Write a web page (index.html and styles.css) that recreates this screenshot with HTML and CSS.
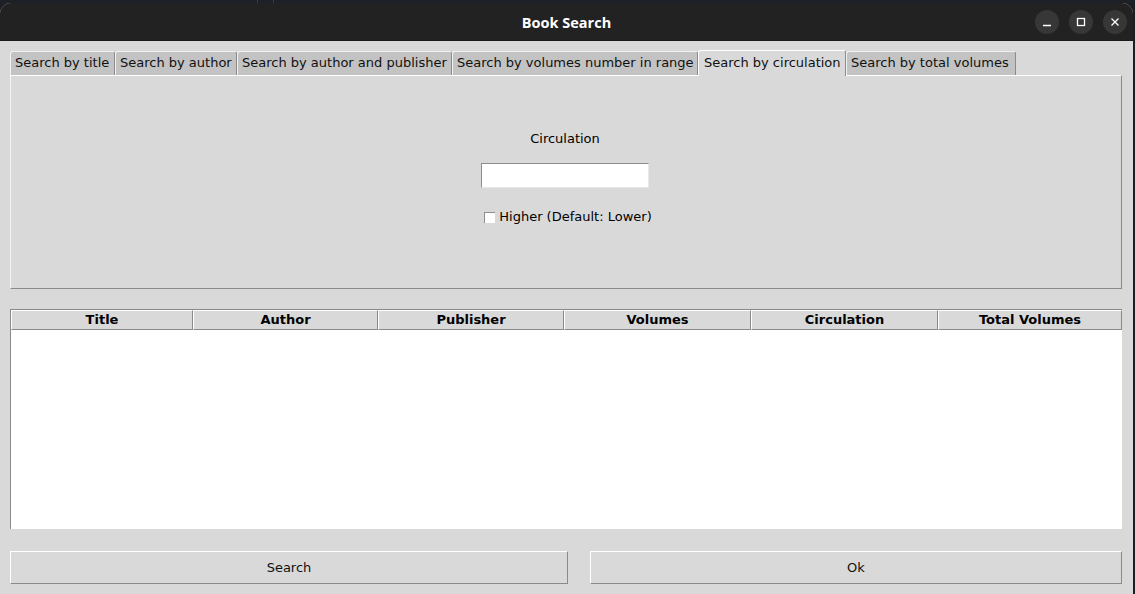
FILE: index.html
```html
<!DOCTYPE html>
<html>
<head>
<meta charset="utf-8">
<title>Book Search</title>
<link rel="stylesheet" href="styles.css">
</head>
<body>
<div class="desktop-strip"><span class="seg seg-a"></span><span class="seg seg-b"></span></div>
<div class="window">
  <div class="titlebar">
    <div class="title">Book Search</div>
    <div class="controls">
      <span class="ctl"><svg width="24" height="24" viewBox="0 0 24 24"><line x1="8" y1="15.5" x2="16" y2="15.5" stroke="#fff" stroke-width="1.3"/></svg></span>
      <span class="ctl"><svg width="24" height="24" viewBox="0 0 24 24"><rect x="8.5" y="8.5" width="7" height="7" fill="none" stroke="#fff" stroke-width="1.3"/></svg></span>
      <span class="ctl"><svg width="24" height="24" viewBox="0 0 24 24"><path d="M8.5 8.5 L15.5 15.5 M15.5 8.5 L8.5 15.5" stroke="#fff" stroke-width="1.3"/></svg></span>
    </div>
  </div>
  <div class="content">
    <div class="tabs">
      <div class="tab t1">Search by title</div>
      <div class="tab t2">Search by author</div>
      <div class="tab t3">Search by author and publisher</div>
      <div class="tab t4">Search by volumes number in range</div>
      <div class="tab t5 active">Search by circulation</div>
      <div class="tab t6">Search by total volumes</div>
    </div>
    <div class="panel">
      <div class="label">Circulation</div>
      <div class="entry"></div>
      <div class="check-row"><span class="checkbox"></span><span class="check-label">Higher (Default: Lower)</span></div>
    </div>
    <div class="tree">
      <div class="tree-head">
        <div class="col c1">Title</div>
        <div class="col c2">Author</div>
        <div class="col c3">Publisher</div>
        <div class="col c4">Volumes</div>
        <div class="col c5">Circulation</div>
        <div class="col c6">Total Volumes</div>
      </div>
      <div class="tree-body"></div>
    </div>
    <div class="buttons">
      <div class="btn btn-search">Search</div>
      <div class="btn btn-ok">Ok</div>
    </div>
  </div>
</div>
</body>
</html>
```

FILE: styles.css
```css
* { box-sizing: border-box; }
html, body { margin: 0; padding: 0; }
body {
  background: #1b1e23;
  width: 1135px;
  height: 594px;
  overflow: hidden;
  font-family: "DejaVu Sans", "Liberation Sans", sans-serif;
}
.desktop-strip {
  height: 3px;
  position: relative;
  background: #1d2026;
}
.seg { position: absolute; top: 0; height: 3px; width: 1px; background: #3a3f47; }
.seg-a { left: 257px; }
.seg-b { left: 273px; }
.window {
  width: 1133px;
  height: 591px;
  border-radius: 11px 11px 0 0;
  overflow: hidden;
  background: #d9d9d9;
  display: flex;
  flex-direction: column;
}
.titlebar {
  height: 38px;
  background: #222222;
  display: flex;
  align-items: center;
  justify-content: center;
  position: relative;
  border-bottom: 1px solid #1a1a1a;
  padding-top: 2px;
}
.title {
  color: #ffffff;
  font-weight: bold;
  font-size: 14.5px;
  font-family: "Open Sans", "DejaVu Sans", sans-serif;
}
.controls {
  position: absolute;
  right: 6px;
  top: 7px;
  display: flex;
  gap: 10px;
}
.ctl {
  width: 24px;
  height: 24px;
  border-radius: 50%;
  background: #373737;
  display: block;
}
.ctl svg { display: block; }
.content {
  flex: 1;
  padding: 10px 11px 0 10px;
  display: flex;
  flex-direction: column;
  font-size: 13px;
  color: #000;
}
.tabs {
  display: flex;
  height: 24px;
  align-items: flex-end;
}
.tab {
  height: 24px;
  background: #c3c3c3;
  border-top: 1px solid #f2f2f2;
  border-left: 1px solid #f2f2f2;
  border-right: 1px solid #8a8a8a;
  border-top-left-radius: 3px;
  border-top-right-radius: 3px;
  padding: 2px 0 0 4px;
  line-height: 17px;
  white-space: nowrap;
  color: #111;
}
.t1 { width: 105px; }
.t2 { width: 122px; }
.t3 { width: 215px; }
.t4 { width: 246px; }
.t5 { width: 149px; }
.t6 { width: 170px; }
.tab.active {
  background: #d9d9d9;
  border-top-color: #ffffff;
  border-left-color: #ffffff;
  border-right-color: #8a8a8a;
  height: 26px;
  margin-bottom: -1px;
  position: relative;
  z-index: 1;
  padding-top: 3px;
  padding-left: 5px;
  width: 148px;
}
.panel {
  height: 214px;
  border-top: 1px solid #ffffff;
  border-left: 1px solid #f4f4f4;
  border-right: 1px solid #8a8a8a;
  border-bottom: 1px solid #8a8a8a;
  display: flex;
  flex-direction: column;
  align-items: center;
  padding-top: 54px;
}
.label {
  line-height: 18px;
  height: 18px;
  margin-right: 2px;
}
.entry {
  margin-top: 15px;
  width: 168px;
  height: 25px;
  margin-right: 2px;
  background: #ffffff;
  border-top: 1px solid #8d8d8d;
  border-left: 1px solid #8d8d8d;
  border-right: 1px solid #e8e8e8;
  border-bottom: 1px solid #e8e8e8;
}
.check-row {
  margin-top: 20px;
  display: flex;
  align-items: center;
  height: 18px;
  margin-left: 4px;
}
.checkbox {
  width: 11px;
  height: 11px;
  background: #ffffff;
  border-top: 1px solid #8d8d8d;
  border-left: 1px solid #8d8d8d;
  margin-right: 4px;
  margin-top: 1px;
}
.check-label { line-height: 18px; }
.tree {
  margin-top: 20px;
  height: 220px;
  display: flex;
  flex-direction: column;
  border-top: 1px solid #8a8a8a;
  border-left: 1px solid #8a8a8a;
}
.tree-head {
  display: flex;
  height: 20px;
  background: #d9d9d9;
}
.col {
  height: 20px;
  text-align: center;
  font-weight: bold;
  line-height: 18px;
  border-top: 1px solid #ffffff;
  border-left: 1px solid #ffffff;
  border-right: 1px solid #8a8a8a;
  border-bottom: 1px solid #8a8a8a;
  color: #000;
}
.c1 { width: 182px; }
.c2 { width: 185px; }
.c3 { width: 186px; }
.c4 { width: 187px; }
.c5 { width: 187px; }
.c6 { width: 184px; }
.tree-body {
  flex: 1;
  background: #ffffff;
}
.buttons {
  margin-top: 22px;
  display: flex;
  gap: 22px;
  height: 33px;
}
.btn {
  height: 33px;
  display: flex;
  align-items: center;
  justify-content: center;
  border-top: 1px solid #ffffff;
  border-left: 1px solid #ffffff;
  border-right: 1px solid #8a8a8a;
  border-bottom: 1px solid #8a8a8a;
  background: #d9d9d9;
  color: #111;
  padding-bottom: 1px;
}
.btn-search { width: 558px; }
.btn-ok { width: 532px; }
```
